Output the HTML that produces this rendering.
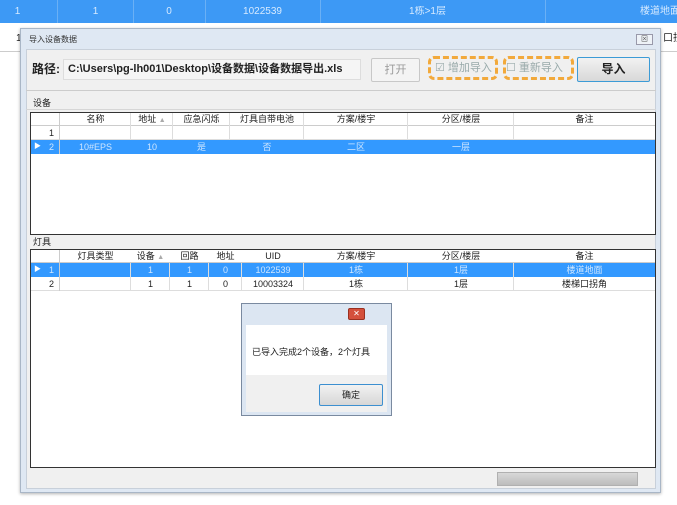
<!DOCTYPE html>
<html><head><meta charset="utf-8"><style>
*{margin:0;padding:0;box-sizing:border-box}
body{width:677px;height:505px;background:#fff;position:relative;overflow:hidden;font-family:"Liberation Sans","Noto Sans CJK SC",sans-serif;font-size:9px;color:#222;line-height:10px}
.a{position:absolute}
.c{position:absolute;text-align:center;white-space:nowrap;overflow:hidden;line-height:10px;height:11px}
.sel{background:#3399ff;color:#cfe6ff}
.t .c{line-height:12px;height:13px}
</style></head><body>
<div class="a t" style="left:0;top:0;width:677px;height:23px;background:#3d99f5;color:#d6eaff;font-size:10px">
<div class="c" style="left:0;width:35px;top:6px">1</div>
<div class="c" style="left:58px;width:75px;top:6px">1</div>
<div class="c" style="left:133px;width:72px;top:6px">0</div>
<div class="c" style="left:205px;width:115px;top:6px">1022539</div>
<div class="c" style="left:320px;width:215px;top:6px">1栋>1层</div>
<div class="a" style="left:640px;top:6px;white-space:nowrap;line-height:12px">楼道地面</div>
<div class="a" style="left:57px;top:0;width:1px;height:23px;background:#6ab0f5"></div>
<div class="a" style="left:133px;top:0;width:1px;height:23px;background:#6ab0f5"></div>
<div class="a" style="left:205px;top:0;width:1px;height:23px;background:#6ab0f5"></div>
<div class="a" style="left:320px;top:0;width:1px;height:23px;background:#6ab0f5"></div>
<div class="a" style="left:545px;top:0;width:1px;height:23px;background:#6ab0f5"></div>
</div>
<div class="a" style="left:16px;top:34px;font-size:10px">1</div>
<div class="a" style="left:663px;top:34px;font-size:10px;white-space:nowrap">口拐</div>
<div class="a" style="left:0;top:51px;width:677px;height:1px;background:#ccc"></div>

<div class="a" style="left:20px;top:28px;width:641px;height:465px;background:#dfe8f3;border:1px solid #a9b6c6;box-shadow:0 1px 3px rgba(0,0,0,.3)">
<div class="a" style="left:8px;top:6px;font-size:8px;color:#333">导入设备数据</div>
<div class="a" style="left:615px;top:5px;width:17px;height:11px;border:1px solid #99a;background:#eef2f7;font-size:7px;text-align:center;line-height:9px;color:#555">⊠</div>
<div class="a" style="left:5px;top:20px;width:630px;height:440px;background:#f0f0f0;border:1px solid #c8d0da"></div>
</div>
<div class="a" style="left:32px;top:62px;font-size:12px;font-weight:bold;line-height:14px">路径:</div>
<div class="a" style="left:63px;top:59px;width:298px;height:21px;border:1px solid #ddd;background:#f5f5f5;font-size:11px;font-weight:bold;padding:3px 4px;white-space:nowrap;line-height:13px">C:\Users\pg-lh001\Desktop\设备数据\设备数据导出.xls</div>
<div class="a" style="left:371px;top:58px;width:49px;height:24px;border:1px solid #c8c8c8;border-radius:2px;background:#f4f4f4;color:#999;font-size:11px;text-align:center;line-height:22px">打开</div>
<div class="a" style="left:428px;top:56px;width:70px;height:24px;border:3px dashed #f2a93b;border-radius:6px;color:#9aa;font-size:11px;line-height:18px;padding-left:4px;white-space:nowrap">☑ 增加导入</div>
<div class="a" style="left:503px;top:56px;width:71px;height:24px;border:3px dashed #f2a93b;border-radius:6px;color:#9aa;font-size:11px;line-height:18px;padding-left:0;white-space:nowrap">☐ 重新导入</div>
<div class="a" style="left:577px;top:57px;width:73px;height:25px;border:1px solid #3c9bd6;border-radius:2px;background:linear-gradient(#f2f2f2,#d8d8d8);font-size:12px;font-weight:bold;text-align:center;line-height:23px">导入</div>
<div class="a" style="left:26px;top:90px;width:630px;height:1px;background:#ccc"></div>
<div class="a" style="left:33px;top:98px">设备</div>
<div class="a" style="left:26px;top:109px;width:630px;height:1px;background:#d6d6d6"></div>

<div class="a" style="left:30px;top:112px;width:626px;height:123px;background:#fff;border:1px solid #333">
<div class="a" style="left:0;top:0;width:624px;height:13px;border-bottom:1px solid #ccc">
<div class="c" style="left:29px;width:71px;top:1px">名称</div>
<div class="c" style="left:100px;width:42px;top:1px">地址 <span style="color:#aaa;font-size:7px">▲</span></div>
<div class="c" style="left:142px;width:57px;top:1px">应急闪烁</div>
<div class="c" style="left:199px;width:74px;top:1px">灯具自带电池</div>
<div class="c" style="left:273px;width:104px;top:1px">方案/楼宇</div>
<div class="c" style="left:377px;width:106px;top:1px">分区/楼层</div>
<div class="c" style="left:483px;width:141px;top:1px">备注</div>
</div>
<div class="a" style="left:0;top:13px;width:624px;height:14px;border-bottom:1px solid #ddd"><div class="a" style="left:18px;top:2px">1</div></div>
<div class="a sel" style="left:0;top:27px;width:624px;height:14px">
<div class="a" style="left:3px;top:2px;color:#fff;font-size:7px">▶</div><div class="a" style="left:18px;top:2px">2</div>
<div class="c" style="left:29px;width:71px;top:2px">10#EPS</div>
<div class="c" style="left:100px;width:42px;top:2px">10</div>
<div class="c" style="left:142px;width:57px;top:2px">是</div>
<div class="c" style="left:199px;width:74px;top:2px">否</div>
<div class="c" style="left:273px;width:104px;top:2px">二区</div>
<div class="c" style="left:377px;width:106px;top:2px">一层</div>
</div>
<div class="a" style="left:28px;top:0;width:1px;height:41px;background:#ccc"></div>
<div class="a" style="left:99px;top:0;width:1px;height:27px;background:#ddd"></div>
<div class="a" style="left:141px;top:0;width:1px;height:27px;background:#ddd"></div>
<div class="a" style="left:198px;top:0;width:1px;height:27px;background:#ddd"></div>
<div class="a" style="left:272px;top:0;width:1px;height:27px;background:#ddd"></div>
<div class="a" style="left:376px;top:0;width:1px;height:27px;background:#ddd"></div>
<div class="a" style="left:482px;top:0;width:1px;height:27px;background:#ddd"></div>
</div>

<div class="a" style="left:33px;top:237px">灯具</div>
<div class="a" style="left:30px;top:249px;width:626px;height:219px;background:#fff;border:1px solid #333">
<div class="a" style="left:0;top:0;width:624px;height:13px;border-bottom:1px solid #ccc">
<div class="c" style="left:29px;width:71px;top:1px">灯具类型</div>
<div class="c" style="left:100px;width:39px;top:1px">设备 <span style="color:#aaa;font-size:7px">▲</span></div>
<div class="c" style="left:139px;width:39px;top:1px">回路</div>
<div class="c" style="left:178px;width:33px;top:1px">地址</div>
<div class="c" style="left:211px;width:62px;top:1px">UID</div>
<div class="c" style="left:273px;width:104px;top:1px">方案/楼宇</div>
<div class="c" style="left:377px;width:106px;top:1px">分区/楼层</div>
<div class="c" style="left:483px;width:141px;top:1px">备注</div>
</div>
<div class="a sel" style="left:0;top:13px;width:624px;height:14px">
<div class="a" style="left:3px;top:2px;color:#fff;font-size:7px">▶</div><div class="a" style="left:18px;top:2px">1</div>
<div class="c" style="left:100px;width:39px;top:2px">1</div>
<div class="c" style="left:139px;width:39px;top:2px">1</div>
<div class="c" style="left:178px;width:33px;top:2px">0</div>
<div class="c" style="left:211px;width:62px;top:2px">1022539</div>
<div class="c" style="left:273px;width:104px;top:2px">1栋</div>
<div class="c" style="left:377px;width:106px;top:2px">1层</div>
<div class="c" style="left:483px;width:141px;top:2px">楼道地面</div>
</div>
<div class="a" style="left:0;top:27px;width:624px;height:14px;border-bottom:1px solid #ddd">
<div class="a" style="left:18px;top:2px">2</div>
<div class="c" style="left:100px;width:39px;top:2px">1</div>
<div class="c" style="left:139px;width:39px;top:2px">1</div>
<div class="c" style="left:178px;width:33px;top:2px">0</div>
<div class="c" style="left:211px;width:62px;top:2px">10003324</div>
<div class="c" style="left:273px;width:104px;top:2px">1栋</div>
<div class="c" style="left:377px;width:106px;top:2px">1层</div>
<div class="c" style="left:483px;width:141px;top:2px">楼梯口拐角</div>
</div>
<div class="a" style="left:28px;top:0;width:1px;height:41px;background:#ccc"></div>
<div class="a" style="left:99px;top:13px;width:1px;height:28px;background:#ddd"></div>
<div class="a" style="left:138px;top:13px;width:1px;height:28px;background:#ddd"></div>
<div class="a" style="left:177px;top:13px;width:1px;height:28px;background:#ddd"></div>
<div class="a" style="left:210px;top:13px;width:1px;height:28px;background:#ddd"></div>
<div class="a" style="left:272px;top:13px;width:1px;height:28px;background:#ddd"></div>
<div class="a" style="left:376px;top:13px;width:1px;height:28px;background:#ddd"></div>
<div class="a" style="left:482px;top:13px;width:1px;height:28px;background:#ddd"></div>
</div>

<div class="a" style="left:241px;top:303px;width:151px;height:113px;background:#dce6f2;border:1px solid #7a8aa0">
<div class="a" style="left:106px;top:4px;width:17px;height:12px;background:#d4503c;border:1px solid #9a3020;border-radius:2px;color:#fff;font-size:8px;text-align:center;line-height:10px">✕</div>
<div class="a" style="left:4px;top:21px;width:141px;height:87px;background:#fff"></div>
<div class="a" style="left:4px;top:71px;width:141px;height:37px;background:#f0f0f0"></div>
<div class="a" style="left:10px;top:43px;white-space:nowrap">已导入完成2个设备，2个灯具</div>
<div class="a" style="left:77px;top:80px;width:64px;height:22px;border:1px solid #3c8fd0;border-radius:2px;background:linear-gradient(#f2f2f2,#d6d6d6);text-align:center;line-height:20px">确定</div>
</div>

<div class="a" style="left:497px;top:472px;width:141px;height:14px;background:linear-gradient(#d8d8d8,#bcbcbc);border:1px solid #b0b0b0"></div>
</body></html>
